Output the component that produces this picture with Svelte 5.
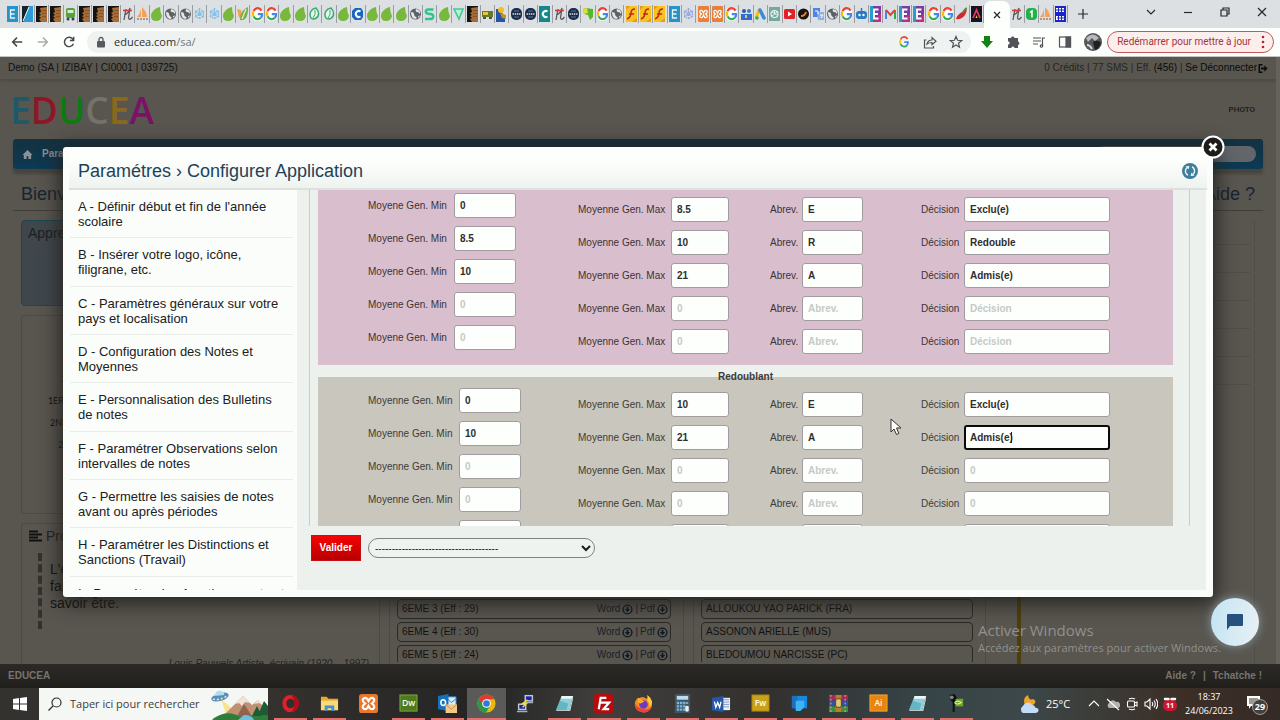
<script>
  const tabs = ('efile slant face face bus face face face script sail leaf globe globe snow snow leaf multi g g leaf leaf ring ring leaf cblue leaf leaf leaf globe sgreen leaf tri face truck worker badge badge cteal script badge map g globe fy ' +
    'fy fy efile spiral xampp xampp g people ads openai youtube planet translate globe g robot epurple gmail epurple epurple g g pepper adark').split(' ');
  const tabsAfter = ['script', 'one', 'sail', 'code'];

  const menu = [
    "A - Définir début et fin de l'année scolaire",
    'B - Insérer votre logo, icône, filigrane, etc.',
    'C - Paramètres généraux sur votre pays et localisation',
    'D - Configuration des Notes et Moyennes',
    'E - Personnalisation des Bulletins de notes',
    'F - Paramétrer Observations selon intervalles de notes',
    'G - Permettre les saisies de notes avant ou après périodes',
    'H - Paramétrer les Distinctions et Sanctions (Travail)',
    'I - Paramétrer les Avertissements et Blâmes'
  ];

  const groups = [
    {
      id: 'nouveau', legend: '', tone: 'pink',
      columns: [
        { id: 'min', label: 'Moyene Gen. Min', hint: '0', values: ['0', '8.5', '10', '', ''] },
        { id: 'max', label: 'Moyenne Gen. Max', hint: '0', values: ['8.5', '10', '21', '', ''] },
        { id: 'abr', label: 'Abrev.', hint: 'Abrev.', values: ['E', 'R', 'A', '', ''] },
        { id: 'dec', label: 'Décision', hint: 'Décision', values: ['Exclu(e)', 'Redouble', 'Admis(e)', '', ''] }
      ]
    },
    {
      id: 'redoublant', legend: 'Redoublant', tone: 'stone',
      columns: [
        { id: 'min', label: 'Moyenne Gen. Min', hint: '0', values: ['0', '10', '', '', ''] },
        { id: 'max', label: 'Moyenne Gen. Max', hint: '0', values: ['10', '21', '', '', ''] },
        { id: 'abr', label: 'Abrev.', hint: 'Abrev.', values: ['E', 'A', '', '', ''] },
        { id: 'dec', label: 'Décision', hint: '0', values: ['Exclu(e)', 'Admis(e)', '', '', ''], active: 1 }
      ]
    }
  ];

  const classes = ['6EME 3 (Eff : 29)', '6EME 4 (Eff : 30)', '6EME 5 (Eff : 24)'];
  const teachers = ['ALLOUKOU YAO PARICK (FRA)', 'ASSONON ARIELLE (MUS)', 'BLEDOUMOU NARCISSE (PC)'];
  const levels = ['1ERE (38)', '1ERE A1 (38)', '2NDE C (38)', '2NDE (38)'];
  const brand = [['E', '#1c5a6b'], ['D', '#8e1626'], ['U', '#0e7a12'], ['C', '#74726b'], ['E', '#8a6a1a'], ['A', '#7a1268']];

  const apps = [
    ['opera', 1], ['folder', 1], ['xampp', 0], ['dw', 1], ['outlook', 1], ['chrome', 1], ['putty', 0], ['note', 1], ['fz', 1],
    ['firefox', 1], ['calc', 1], ['word', 1], ['fw', 1], ['blue', 1], ['rar', 1], ['ai', 1], ['note', 1], ['cam', 1]
  ];
</script>

{#snippet googleG()}
  <path d="M9.6 4.6A4.6 5.4 0 0 0 1.6 5.2" stroke="#e94335" />
  <path d="M1.6 5.2a5 5.6 0 0 0 0 5.2" stroke="#fbbc05" />
  <path d="M1.6 10.4a4.6 5.4 0 0 0 7.2 1.4" stroke="#34a853" />
  <path d="M8.8 11.8a5 5 0 0 0 1.3-3.6H5.8" stroke="#4285f4" />
{/snippet}

{#snippet fav(kind)}
  <svg class="fav" viewBox="0 0 11 16" aria-hidden="true">
    {#if kind === 'efile'}
      <rect width="11" height="16" fill="#2793c6" /><path d="M8 4H3.5v8H8M3.5 8h4" stroke="#e8f6fc" stroke-width="1.3" fill="none" />
    {:else if kind === 'slant'}
      <rect width="11" height="16" fill="#2a9bd6" /><path d="M0 0h7L1 16H0z" fill="#14242c" /><path d="M7 1 1 15" stroke="#fff" stroke-width="1" />
    {:else if kind === 'face'}
      <rect width="11" height="16" fill="#15120f" /><path d="M4 2l7-1v15H5l-2-3 2-1-2-2 2-1-2-2 2-1z" fill="#a36c38" /><path d="M6 4.500h5M6 7.500h4M6 10.500h4" stroke="#7d4f27" stroke-width=".8" />
    {:else if kind === 'bus'}
      <rect x="1" y="2" width="9" height="10" rx="2" fill="#57a13c" /><rect x="2.500" y="4" width="6" height="3" fill="#d6ecd0" /><circle cx="3" cy="13" r="1.500" fill="#345" /><circle cx="8" cy="13" r="1.500" fill="#345" />
    {:else if kind === 'script'}
      <path d="M4 3 2 14M2 9c4 0 4-3 6-7L6.500 12q1 3 4-1" stroke="#5a5a5e" stroke-width="1.300" fill="none" /><path d="M1 4.500h9" stroke="#d43b3b" stroke-width="1.600" />
    {:else if kind === 'sail'}
      <path d="M0 11Q3 8 4 3v8zM5 11V1q5 5 5 10z" fill="#f2a25c" /><path d="M0 13h11" stroke="#a49a94" stroke-width="2" stroke-dasharray="2 1" />
    {:else if kind === 'leaf'}
      <path d="M9 1C4 2 0 6 0 10q0 5 5 5 5 0 6-5-2-4-2-9z" fill="#78b83c" />
    {:else if kind === 'globe'}
      <circle cx="5.500" cy="8" r="5.500" fill="#5c6165" /><path d="M1 6q3 0 3 2t2 3-1 2Q1 12 1 6M6 3q-1 3 1 3t3 2q1-4-4-5M8 10l2-.5-1.500 2.500z" fill="#e2e6e9" />
    {:else if kind === 'snow' || kind === 'spiral'}
      <g stroke={kind === 'snow' ? '#7fbde6' : '#97a4dc'} stroke-width="1.400" fill="none"><path d="M5.500 2v12M1 5l9 6M10 5l-9 6" stroke-dasharray="2 1" /><circle cx="5.500" cy="8" r="4" stroke-dasharray="1.500 1" /></g>
    {:else if kind === 'multi'}
      <path d="M0 3l4 1 1 6-3 2z" fill="#f4a052" /><path d="M11 1C5 4 3 8 3 14c6 1 8-4 8-12" fill="#6fae59" /><path d="M9 3 5 13" stroke="#f0e3a0" stroke-width="1.500" />
    {:else if kind === 'g'}
      <rect y="1" width="11" height="14" rx="5" fill="#fff" /><g fill="none" stroke-width="2.200">{@render googleG()}</g>
    {:else if kind === 'ring'}
      <path d="M7 2C2 3 0 7 1.500 11q1 3 5 1.500C11 10 10 5 7 2z" fill="#e8f6ee" stroke="#3ea873" stroke-width="1.500" /><path d="M6 4Q7 9 4 12" stroke="#3ea873" fill="none" />
    {:else if kind === 'cblue' || kind === 'cteal'}
      {#if kind === 'cblue'}
        <path d="M3 2h6l2 3v6l-2 3H3l-3-3V5z" fill="#1567c2" />
      {:else}
        <rect width="11" height="16" fill="#14878a" />
      {/if}
      <path d="M8.500 5.500A3 3 0 1 0 8.500 10.500" fill="none" stroke="#fff" stroke-width="2" />
    {:else if kind === 'sgreen'}
      <path d="M9.500 3.500H4Q1 4 2 6.500q1 1.500 5 1.500 3 1 2 3.500Q8.500 13 6 13H1" stroke="#31c48f" stroke-width="2.500" fill="none" />
    {:else if kind === 'tri'}
      <path d="M1 3h9L6 13z" fill="#b9efd6" stroke="#3ccb93" stroke-width="1.600" />
    {:else if kind === 'truck'}
      <rect y="5" width="11" height="6" fill="#667a2a" /><rect x="1" y="6" width="5" height="3" fill="#e6c53b" /><path d="M1 12h3m3 0h3" stroke="#222" stroke-width="1.500" />
    {:else if kind === 'worker'}
      <path d="M0 3h4l5 9v4H0z" fill="#2456a8" /><circle cx="5" cy="4" r="3" fill="#f4bd1b" /><path d="M4 7l6 2v4l-4-1z" fill="#c98c27" />
    {:else if kind === 'badge'}
      <rect y="2" width="11" height="12" rx="5" fill="#1b2c49" /><path d="M1.500 8h8" stroke="#d8dee6" stroke-width="1.400" stroke-dasharray="1.500 .7" /><path d="M3 5h5M3 11h5" stroke="#5c7193" />
    {:else if kind === 'map'}
      <path d="M1 3 4 2l7 1v8l-3 3-2-5-4-1z" fill="#55b82b" /><path d="M1 3l4-1 1 5-4 1z" fill="#e6d93a" />
    {:else if kind === 'fy'}
      <rect width="11" height="16" fill="#f6c21c" /><path d="M9 3Q5 3 5 7T1 13M3 8h5" stroke="#c8231c" stroke-width="1.500" fill="none" /><path d="M0 0h4L0 4zM11 16H6l5-4z" fill="#e8991a" />
    {:else if kind === 'xampp'}
      <rect width="11" height="16" rx="1" fill="#e8803a" /><path d="M2 5q1-1.500 2.500 0L5.500 7l1-2q1.500-1.500 2.500 0t-1.500 3q2.500 1.500 1.500 3t-2.500 0l-1-2-1 2q-1.500 1.500-2.500 0t1.500-3Q1 6.500 2 5z" stroke="#fff" stroke-width="1.200" fill="none" />
    {:else if kind === 'people'}
      <rect y="8" width="11" height="6" fill="#2c6fd0" /><circle cx="3" cy="5" r="2" fill="#2a5ca8" /><circle cx="8" cy="5" r="2" fill="#3a78d8" /><path d="M5 9v3" stroke="#f1c93a" stroke-width="2" />
    {:else if kind === 'ads'}
      <path d="M4 4 1.500 11" stroke="#fbbc04" stroke-width="3" stroke-linecap="round" /><path d="m5 4 4 8" stroke="#3c8bd9" stroke-width="3.500" stroke-linecap="round" /><circle cx="2" cy="12" r="1.800" fill="#34a853" />
    {:else if kind === 'openai'}
      <rect y="1" width="11" height="14" fill="#74aa9c" /><circle cx="5.500" cy="8" r="3.500" fill="none" stroke="#e6f3ef" stroke-width="1.200" /><path d="M3 6l5 3M8 6l-5 4M5.500 4v3" stroke="#e6f3ef" />
    {:else if kind === 'youtube'}
      <rect y="3" width="11" height="10" rx="1.500" fill="#e41f26" /><path d="m4 5.500 4 2.500-4 2.500z" fill="#fff" />
    {:else if kind === 'planet'}
      <circle cx="5.500" cy="8" r="5.500" fill="#171310" /><path d="M3 10q4 0 5-4" stroke="#ef7c2a" stroke-width="2" fill="none" />
    {:else if kind === 'translate'}
      <rect y="2" width="7" height="9" fill="#4a86e8" /><path d="M4 6h7v8H5z" fill="#8fb0e0" /><path d="M2 5h3v3M7 9h3l-2 3" stroke="#fff" fill="none" />
    {:else if kind === 'robot'}
      <rect x="0" y="5" width="11" height="8" rx="3" fill="#2b7bc4" /><path d="M5.500 2v3" stroke="#2b7bc4" stroke-width="1.500" /><circle cx="3.500" cy="9" r="1.200" fill="#fff" /><circle cx="7.500" cy="9" r="1.200" fill="#fff" />
    {:else if kind === 'epurple'}
      <rect width="11" height="16" fill="#2a9cc6" /><path d="M3 0h8v9L3 16z" fill="#7a3aa0" /><path d="M3 16 11 7v9z" fill="#c22f7e" /><path d="M8.500 3.500H4v9h4.500M4 8h4" stroke="#fff" stroke-width="1.800" fill="none" />
    {:else if kind === 'gmail'}
      <path d="M1 13V4" stroke="#4285f4" stroke-width="2" /><path d="M10 13V4" stroke="#34a853" stroke-width="2" /><path d="m1 4 4.500 5L10 4" stroke="#ea4335" stroke-width="2" fill="none" />
    {:else if kind === 'pepper'}
      <path d="M11 3Q8 4 6 6 1 9 0 13q7 1 10-6z" fill="#d4262e" /><path d="M7 7q1-4 4-5" stroke="#5c8a3a" stroke-width="1.500" fill="none" />
    {:else if kind === 'adark'}
      <rect width="11" height="16" fill="#131420" /><path d="M2 12 5.500 4 9 12" stroke="#e23a5a" stroke-width="1.800" fill="none" /><path d="m4.500 12 1-3 1 3z" fill="#f3c23a" />
    {:else if kind === 'one'}
      <rect y="2" width="11" height="12" rx="4" fill="#25b04b" /><path d="M4 6.500 6 5v6.500" stroke="#fff" stroke-width="1.500" fill="none" />
    {:else if kind === 'code'}
      <rect width="11" height="16" fill="#1c23c8" /><path d="M1 4h9M1 12h9" stroke="#fff" stroke-width="4" stroke-dasharray="2 1" /><path d="M0 4h11M2 12h7" stroke="#1c23c8" />
    {/if}
  </svg>
{/snippet}

{#snippet download()}
  <svg class="dl" viewBox="0 0 12 12" aria-hidden="true"><circle cx="6" cy="6" r="4.800" fill="none" stroke="#0e1b26" stroke-width="1.500" /><path d="M5 3h2v2.500h2L6 9 3 5.500h2z" fill="#0e1b26" /></svg>
{/snippet}

{#snippet appIcon(kind)}
  <svg class="app-icon" viewBox="0 0 20 20" aria-hidden="true">
    {#if kind === 'opera'}
      <ellipse cx="10" cy="10" rx="6.500" ry="7.200" fill="none" stroke="#e0202c" stroke-width="4.200" /><path d="M10 .8q9 1 9 9.200t-9 9.200q4-2 4-9.200T10 .8" fill="#a8101c" />
    {:else if kind === 'folder'}
      <path d="M1 3h6l2 2h10v12H1z" fill="#e9a92b" /><path d="M1 7h18v10H1z" fill="#fbd978" /><path d="M5 18v-6h10v6h-3v-3H8v3z" fill="#3f93d2" />
    {:else if kind === 'xampp'}
      <rect x="0" y="0" width="20" height="20" rx="3" fill="#e9772c" /><path d="M4.500 5q2-2 4 0L10 7.500 11.500 5q2-2 4 0t-2 5q4 3 2 5t-4 0L10 12.500 8.500 15q-2 2-4 0t2-5q-4-3-2-5z" stroke="#fff" stroke-width="2.200" fill="none" />
    {:else if kind === 'dw' || kind === 'fw' || kind === 'ai'}
      <rect x="1" y="1" width="18" height="17" fill={kind === 'dw' ? '#4d7a1c' : kind === 'fw' ? '#c9a21c' : '#e8850f'} stroke={kind === 'dw' ? '#7dad3a' : kind === 'fw' ? '#a8830c' : '#f7a83a'} />
      <text x="10" y="13" text-anchor="middle" font-family="Open Sans" font-size="9" font-weight="600" fill="#fdfbe8">{kind === 'dw' ? 'Dw' : kind === 'fw' ? 'Fw' : 'Ai'}</text>
    {:else if kind === 'outlook'}
      <path d="M9 3h10v12H9z" fill="#d9ecf8" stroke="#2a86cf" /><path d="M10 5l4 4 5-4" stroke="#2a86cf" fill="none" /><path d="M0 2l11-2v18L0 16z" fill="#1670c0" /><ellipse cx="5.500" cy="9" rx="2.500" ry="3" fill="none" stroke="#fff" stroke-width="1.600" /><path d="M8 11h12v9H8z" fill="#f3c98b" /><path d="m8 11 6 5 6-5" stroke="#c98f43" fill="none" />
    {:else if kind === 'chrome'}
      <circle cx="10" cy="10" r="9.500" fill="#e8b90b" /><path d="M10 10 1.800 5.200A9.500 9.500 0 0 0 9.600 19.500L13.900 12z" fill="#259a49" /><path d="M10 5.500h8.300L18.200 5.200A9.500 9.500 0 0 0 1.800 5.200L6 12z" fill="#df3b30" /><circle cx="10" cy="10" r="4.600" fill="#fff" /><circle cx="10" cy="10" r="3.500" fill="#2f77e0" />
    {:else if kind === 'putty'}
      <rect x="9" y="1" width="9" height="7" fill="#c3c7d0" /><rect x="10.500" y="2.500" width="6" height="4" fill="#1723b8" /><rect x="2" y="10" width="9" height="7" fill="#c3c7d0" /><rect x="3.500" y="11.500" width="6" height="4" fill="#1723b8" /><path d="M9 9h9M1 18.500h11" stroke="#aab" stroke-width="1.500" /><path d="m12 6-5 4h4l-4 4" stroke="#f1e222" stroke-width="1.500" fill="none" />
    {:else if kind === 'note'}
      <path d="M7 2h12l-4 15H1z" fill="#8fd0da" /><path d="M7 2h12l-1 3H6z" fill="#eef6f6" /><path d="M1 17 5 7l9 3-2 7z" fill="#4aa4b4" opacity=".6" /><path d="M1 17h14l4-15v3l-3 13H2z" fill="#dfe5e6" />
    {:else if kind === 'fz'}
      <rect width="20" height="20" rx="2" fill="#b60c0c" /><path d="M5 16 7 4h6M6 9h4M10 9h6l-6 7h6" stroke="#fff" stroke-width="2.300" fill="none" />
    {:else if kind === 'firefox'}
      <path d="M4 4q-4 4-3 9 2 6 9 6.500 8-.5 9-8Q19 5 14 1q1 3-1 4-5-4-9 1z" fill="#f98a1e" /><path d="M1 10q0 8 9 9.500Q17 19 19 12q-3 5-9 4Q4 15 1 10" fill="#ee3f3e" /><circle cx="10" cy="11" r="4.500" fill="#6b3bc4" /><path d="M14 1q1 3 0 6 3 3 2 7 3-2 3-6-1-4-5-7" fill="#ffcd3a" /><path d="M4 4q2 0 4 2l3 2-4 2-3-1z" fill="#ffab2b" />
    {:else if kind === 'calc'}
      <path d="M2 0h16v20H2z" fill="#46545e" /><rect x="4" y="2" width="12" height="4" fill="#b9dcef" /><path d="M4 9.500h9M4 13h9M4 16.500h9" stroke="#6fb9e6" stroke-width="2.500" stroke-dasharray="2.500 .8" /><path d="M13.500 9.500h2.500M13.500 13h2.500v5h-2.500z" stroke="#eaf2f6" fill="#eaf2f6" />
    {:else if kind === 'word'}
      <path d="M9 4h10v13H9z" fill="#e8eef6" /><path d="M12 6h6M12 8.500h6M12 11h6M12 13.500h6" stroke="#7f9cc8" /><path d="M0 4l12-2v17L0 17z" fill="#2458a4" /><path d="m2.500 8 1.500 6 2-5 2 5 1.500-6" stroke="#fff" stroke-width="1.400" fill="none" />
    {:else if kind === 'blue'}
      <path d="M2 2h16v13H2z" fill="#1788dd" /><path d="M2 2h6v13H2z" fill="#1f6fc1" /><path d="M6 7h9v7l-4 4H6z" fill="#3cb5f2" />
    {:else if kind === 'rar'}
      <rect y="1" width="20" height="6" fill="#a32a56" /><rect y="7" width="20" height="6" fill="#2f4fa8" /><rect y="13" width="20" height="6" fill="#3f8d3a" /><rect x="7" y="1" width="6" height="18" fill="#b3802f" /><rect x="7" y="5" width="6" height="9" rx="2" fill="#e5c66a" stroke="#5a3b12" /><path d="M2 1v18M17 1v18" stroke="#e7b8a8" stroke-dasharray="2 2" />
    {:else if kind === 'cam'}
      <path d="M3 1l5-1 3 5-3 4v10H6V9L3 5z" fill="#0e0f10" /><circle cx="5" cy="3.500" r="2" fill="#7d8488" /><path d="M9 5h8v8H9z" fill="#6fa51f" /><path d="M8 9q3-3 7 0-4 3-7 0" fill="none" stroke="#dcefb8" stroke-width="1.200" />
    {/if}
  </svg>
{/snippet}

<div class="screen">
  <header class="chrome">
    <div class="tabstrip">
      <div class="tabs">
        {#each tabs as t}<span class="tab">{@render fav(t)}</span>{/each}
      </div>
      <button class="active-tab" aria-label="Fermer l'onglet"><svg viewBox="0 0 10 10"><path d="m2 2 6 6M8 2 2 8" /></svg></button>
      <div class="tabs tabs-after">
        {#each tabsAfter as t}<span class="tab">{@render fav(t)}</span>{/each}
      </div>
      <button class="newtab" aria-label="Nouvel onglet"><svg viewBox="0 0 12 12"><path d="M6 1v10M1 6h10" /></svg></button>
      <div class="winctl">
        <button aria-label="Rechercher dans les onglets"><svg viewBox="0 0 12 12"><path d="m2 4 4 4 4-4" /></svg></button>
        <button aria-label="Réduire"><svg viewBox="0 0 12 12"><path d="M2 6.500h8" /></svg></button>
        <button aria-label="Restaurer"><svg viewBox="0 0 12 12"><path d="M2 4h6v6H2zM4 4V2h6v6H8" /></svg></button>
        <button aria-label="Fermer"><svg viewBox="0 0 12 12"><path d="m2 2 8 8M10 2l-8 8" /></svg></button>
      </div>
    </div>
    <div class="toolbar">
      <div class="navbtns">
        <button aria-label="Retour"><svg viewBox="0 0 16 16"><path d="M14 8H3M8 3 3 8l5 5" /></svg></button>
        <button class="off" aria-label="Avancer"><svg viewBox="0 0 16 16"><path d="M2 8h11M8 3l5 5-5 5" /></svg></button>
        <button aria-label="Actualiser"><svg viewBox="0 0 16 16"><path d="M12.500 5A5.300 5.300 0 1 0 13 10M13.300 2v4.300H9" /></svg></button>
      </div>
      <div class="address">
        <svg class="lock" viewBox="0 0 10 12"><rect x="1" y="5" width="8" height="6.500" rx="1" fill="#565a5e" /><path d="M3 5V3.500a2 2 0 0 1 4 0V5" fill="none" stroke="#565a5e" stroke-width="1.300" /></svg>
        <span class="url">educea.com<i>/sa/</i></span>
        <svg class="tool" viewBox="0 0 11 16"><g fill="none" stroke-width="1.900">{@render googleG()}</g></svg>
        <svg class="tool line" viewBox="0 0 14 14"><path d="M3.500 5H1.500v8h9v-2M4 9q1-4 5-4V2.500l4 3.700-4 3.500V7.500Q6 7.500 4 9z" /></svg>
        <svg class="tool line" viewBox="0 0 14 14"><path d="m7 1.500 1.600 3.800 4 .3-3.100 2.600 1 4L7 10l-3.500 2.200 1-4L1.400 5.600l4-.3z" /></svg>
      </div>
      <div class="extensions">
        <svg viewBox="0 0 14 14"><path d="M4 1h6v5h3l-6 7-6-7h3z" fill="#118311" /></svg>
        <svg viewBox="0 0 14 14"><path d="M5 3a1.800 1.800 0 0 1 3.500 0H12v3.500a1.800 1.800 0 0 1 0 3.500v3H8.500a1.600 1.600 0 0 0-3.200 0H2V9.500a1.600 1.600 0 0 0 0-3.200V3z" fill="#505458" /></svg>
        <svg class="line" viewBox="0 0 14 14"><path d="M1 3h8M1 6h8M1 9h5M10.500 11V3H13" /><circle cx="9.500" cy="11" r="1.200" /></svg>
        <svg class="line" viewBox="0 0 14 14"><rect x="1.500" y="2" width="11" height="10" /><path d="M8 2h4.500v10H8z" fill="#505458" /></svg>
        <svg class="avatar" viewBox="0 0 18 18"><circle cx="9" cy="9" r="9" fill="#55575a" /><path d="M2 5Q9-2 15 5L11 8 8 5 4 9z" fill="#b9bcbf" /><path d="M9 9q5-3 8 1-2 6-6 7z" fill="#1e1f21" /><path d="M3 12q3 0 5 4" stroke="#d6d8da" stroke-width="2" fill="none" /></svg>
      </div>
      <button class="update">Redémarrer pour mettre à jour<svg viewBox="0 0 4 14"><circle cx="2" cy="2" r="1.300" /><circle cx="2" cy="7" r="1.300" /><circle cx="2" cy="12" r="1.300" /></svg></button>
    </div>
  </header>

  <main class="page">
    <div class="topbar">
      <span>Demo (SA | IZIBAY | CI0001 | 039725)</span>
      <span class="account">0 Crédits | 77 SMS | Eff. <b>(456)</b> | <a href="#sortie">Se Déconnecter</a>
        <svg viewBox="0 0 12 12"><path d="M6 2H2.500v8H6" fill="none" stroke="#0c0c0b" stroke-width="1.600" /><path d="M4.500 5H8V2.500L11.500 6 8 9.500V7H4.500z" fill="#0c0c0b" /></svg>
      </span>
    </div>
    <div class="wrap">
      <div class="brandrow">
        <h1>{#each brand as [c, color]}<span style="color:{color}">{c}</span>{/each}</h1>
        <span class="photo">PHOTO</span>
      </div>
      <nav class="mainnav">
        <svg viewBox="0 0 12 12"><path d="M6 1 .5 6.500H2V11h3V8h2v3h3V6.500h1.500z" fill="#8b9295" /></svg>
        <a href="#parametres">Paramètres</a>
        <input type="search" aria-label="Rechercher" />
      </nav>
      <div class="titles"><h2>Bienvenue</h2><h2>Aide ?</h2></div>
      <div class="columns">
        <div class="col left">
          <section class="notice">Apprendre</section>
          <section class="panel levels">{#each levels as l}<p>{l}</p>{/each}</section>
          <section class="panel quote">
            <h3><svg viewBox="0 0 13 12"><path d="M0 1.500h9M0 4.500h13M0 7.500h9M0 10.500h13" stroke="#11110f" stroke-width="2" /></svg>Proverbe</h3>
            <blockquote>L'école<br />fait<br />savoir être.</blockquote>
            <cite>Louis Pauwels Artiste, écrivain (1920 – 1997)</cite>
          </section>
        </div>
        <section class="panel listing">
          <ul>
            {#each classes as c}
              <li><span>{c}</span><span class="files"><a href="#word">Word {@render download()}</a> | <a href="#pdf">Pdf {@render download()}</a></span></li>
            {/each}
          </ul>
        </section>
        <section class="panel listing">
          <ul>{#each teachers as t}<li><span>{t}</span></li>{/each}</ul>
        </section>
        <aside class="help">{#each Array(6) as _}<hr />{/each}</aside>
      </div>
    </div>
    <div class="rail"></div>

    <div class="dialog" role="dialog" aria-label="Configurer Application">
      <div class="dialog-head">
        <h2>Paramétres › Configurer Application</h2>
        <button class="refresh" aria-label="Actualiser la fenêtre"><svg viewBox="0 0 16 16"><circle cx="8" cy="8" r="8" fill="#3f7d9c" /><path d="M6 12.300A4.600 4.600 0 0 1 5.200 4.500M10 3.700a4.600 4.600 0 0 1 .8 7.800" fill="none" stroke="#e4f2f8" stroke-width="1.500" /><path d="M3.500 3.300 7.500 3 6.500 6.600zM12.500 12.700 8.500 13l1-3.600z" fill="#e4f2f8" /></svg></button>
      </div>
      <div class="dialog-body">
        <ul class="menu">{#each menu as m}<li><a href="#menu">{m}</a></li>{/each}</ul>
        <form class="config">
          <div class="scroller">
            {#each groups as g}
              <fieldset class={g.tone} aria-label={g.legend || 'Non redoublant'}>
                {#if g.legend}<legend>{g.legend}</legend>{/if}
                <div class="fields">
                  {#each g.columns as c}
                    <div class="field-col {c.id}">
                      {#each c.values as v, i}
                        <label class:active={c.active === i}>
                          <span>{c.label}</span>
                          <input type="text" name="{g.id}-{c.id}-{i}" value={v} placeholder={c.hint} />
                          {#if c.active === i}<i class="caret"></i>{/if}
                        </label>
                      {/each}
                    </div>
                  {/each}
                </div>
              </fieldset>
            {/each}
          </div>
          <div class="actions">
            <button type="button" class="submit">Valider</button>
            <select aria-label="Action"><option>-------------------------------------</option></select>
          </div>
        </form>
      </div>
      <button class="close" aria-label="Fermer la fenêtre"><svg viewBox="0 0 24 24"><circle cx="12" cy="12" r="10.500" fill="#1d1c1b" stroke="#fff" stroke-width="2" /><path d="m8.500 8.500 7 7M15.500 8.500l-7 7" stroke="#fff" stroke-width="2.800" /></svg></button>
    </div>

    <div class="watermark"><p>Activer Windows</p><small>Accédez aux paramètres pour activer Windows.</small></div>
    <button class="chat" aria-label="Discussion"><svg viewBox="0 0 18 18"><path d="M2 1h14q1 0 1 1v10q0 1-1 1H4l-3 4V2q0-1 1-1z" fill="#26517e" /></svg></button>
    <svg class="pointer" viewBox="0 0 12 18"><path d="M1 1v13l3-3 2.500 5.500 2.300-1L6.500 10H11z" fill="#fff" stroke="#33332f" /></svg>
  </main>

  <footer class="sitefoot"><b>EDUCEA</b><span><a href="#aide">Aide ?</a><i>|</i><a href="#tchatche">Tchatche !</a></span></footer>

  <div class="taskbar">
    <button class="start" aria-label="Démarrer"><svg viewBox="0 0 14 14"><path d="M0 2l6-1v5.500H0zM7 .900 14 0v6.500H7zM0 7.500h6V13l-6-1zM7 7.500h7V14l-7-1z" fill="#fff" /></svg></button>
    <label class="search">
      <svg class="lens" viewBox="0 0 14 14"><circle cx="8.500" cy="5.500" r="4.500" /><path d="m5 9-4.500 4.500" /></svg>
      <input type="text" placeholder="Taper ici pour rechercher" aria-label="Taper ici pour rechercher" />
      <svg class="scene" viewBox="0 0 58 32" preserveAspectRatio="xMaxYMid slice"><path d="M11 11l15 13-8 8z" fill="#f9e48c" /><path d="M12 29 33 8l9 9 6-5 10 12v8H12z" fill="#c09072" /><path d="m33 8-8 8 4-1 3 3 3-4 5 1zM48 12l-4 4 5-1 3 2z" fill="#f1e3d6" /><path d="M34 16l9 14H26z" fill="#8f6550" /><path d="M4 30q14-9 26-1l28-3v6H2z" fill="#2e7d3a" /><path d="M47 18l-5 10h10zM54 13l-6 14h10V18z" fill="#1c5b33" /><path d="M34 27q8 0 10 5H28z" fill="#6fc0dc" /><ellipse cx="10" cy="9" rx="9" ry="4" transform="rotate(-16 10 9)" fill="#5c8fb4" /><path d="M4 8q2-6 7-5 4 1 3 4z" fill="#aee0f3" /><path d="M3 11q6 2 14-3" stroke="#dce9f1" stroke-width="1.500" stroke-dasharray="2 2" fill="none" /></svg>
    </label>
    <div class="apps">
      {#each apps as [name, running]}
        <button class:running={running === 1} class:current={name === 'chrome'} aria-label={name}>{@render appIcon(name)}</button>
      {/each}
    </div>
    <div class="tray">
      <svg class="weather" viewBox="0 0 20 20"><path d="M9 1Q3 4 6 11h8q5-4 0-6-4 2-5-4z" fill="#eda62b" /><path d="M4 19a4 4 0 0 1 0-7 5 5 0 0 1 9-1q3 0 3 2.500 4 .5 3.500 3Q19 19 16 19z" fill="#c5dcf8" /></svg>
      <span class="temp">25°C</span>
      <div class="status">
        <svg viewBox="0 0 14 14"><path d="m2 9 5-5 5 5" /></svg>
        <svg viewBox="0 0 14 14"><path d="M3 11a3 3 0 0 1 0-5 4 4 0 0 1 7-1 3 3 0 0 1 2 6z" fill="#b4b2ae" stroke="none" /><path d="m1 2 12 11" /></svg>
        <svg viewBox="0 0 14 14"><rect x="2.500" y="4" width="7" height="6" rx="1" /><path d="m9.500 6 2.500-1v4l-2.500-1M4 2q3-1.500 6 0M4 12q3 1.500 6 0" /></svg>
        <svg viewBox="0 0 14 14"><path d="M1 5h2l3-3v10L3 9H1zM8 5q1.500 2 0 4M10 3.500q2.500 3.500 0 7M12 2q3.500 5 0 10" /></svg>
        <svg viewBox="0 0 14 14"><rect x="0" y="3" width="14" height="11" rx="5" fill="#cf1430" stroke="none" /><path d="M2 2h3.500M8.500 2h3.500" stroke-width="2.500" stroke-linecap="round" /><text x="7" y="11" text-anchor="middle" font-size="7" font-weight="700" font-family="Open Sans" fill="#fff" stroke="none">11</text></svg>
      </div>
      <time><span>18:37</span><span>24/06/2023</span></time>
      <svg class="notif" viewBox="0 0 22 22"><path d="M1 3h13v10H5l-2 3v-3H1z" fill="#fff" /><path d="M3 6h9M3 8h9M3 10h6" stroke="#3b332c" /><circle cx="14" cy="14" r="7.500" fill="#44403b" stroke="#a19d98" /><text x="14" y="17" text-anchor="middle" font-size="9" font-weight="700" font-family="Open Sans" fill="#fff">29</text></svg>
    </div>
  </div>
</div>

<style>
  :global(body) { background: #595650; }
  * { box-sizing: border-box; }
  h1, h2, h3, p, ul, blockquote { margin: 0; padding: 0; font-weight: 400; }
  ul { list-style: none; }
  a { color: inherit; text-decoration: none; }
  button { padding: 0; border: 0; background: none; color: inherit; font: inherit; }
  svg { display: block; flex: none; }
  .screen { height: 100vh; display: flex; flex-direction: column; overflow: hidden; font: 10px/12px "Liberation Sans", Arial, sans-serif; color: #11110f; }

  .chrome { flex: none; font-family: "Open Sans", sans-serif; }
  .tabstrip { height: 28px; display: flex; background: #dce0e3; padding-left: 6px; }
  .tabs { flex: 1; display: grid; grid-auto-flow: column; grid-auto-columns: 1fr; align-items: center; }
  .tabs-after { flex: none; width: 58px; }
  .tab { display: flex; justify-content: center; border-right: 1px solid #9a9ea2; height: 18px; align-items: center; }
  .fav { width: 11px; height: 16px; }
  .active-tab { width: 26px; margin-top: 1px; border-radius: 7px 7px 0 0; background: #fdfffd; display: grid; place-items: center; }
  .active-tab svg { width: 10px; height: 10px; }
  .newtab { width: 30px; display: grid; place-items: center; }
  .newtab svg, .winctl svg { width: 12px; height: 12px; }
  .active-tab svg, .newtab svg, .winctl svg { fill: none; stroke: #26282a; stroke-width: 1.2; }
  .winctl { display: grid; grid-template-columns: repeat(4, 37px); margin-left: 34px; }
  .winctl button { display: grid; place-items: center; padding-bottom: 4px; }
  .toolbar { height: 29px; display: flex; align-items: center; background: #fdfffd; border-bottom: 1px solid #c2c5c2; }
  .navbtns { display: flex; gap: 12px; padding: 0 11px 0 10px; }
  .navbtns svg { width: 14px; height: 14px; fill: none; stroke: #45494c; stroke-width: 1.7; }
  .navbtns .off svg { stroke: #a9acae; }
  .address { flex: 1; height: 22px; border-radius: 11px; background: #eef2f1; display: flex; align-items: center; gap: 12px; padding: 0 8px 0 9px; }
  .lock { width: 10px; height: 12px; }
  .url { flex: 1; margin-left: -4px; font-size: 11px; line-height: 16px; color: #2c2f31; }
  .url i { font-style: normal; color: #72767a; }
  .tool { width: 14px; height: 14px; }
  .line { fill: none; stroke: #505458; stroke-width: 1.2; }
  .extensions { display: flex; align-items: center; gap: 12px; padding: 0 5px 0 9px; }
  .extensions svg { width: 14px; height: 14px; }
  .extensions .avatar { width: 18px; height: 18px; }
  .update { height: 22px; margin-right: 6px; padding: 0 8px 0 9px; border: 1px solid #c05a5a; border-radius: 11px; background: #fbeeec; color: #a8343a; font: 10px/12px Roboto, sans-serif; display: flex; align-items: center; gap: 10px; white-space: nowrap; }
  .update svg { width: 4px; height: 14px; fill: #b3262d; }

  .page { flex: 1; min-height: 0; position: relative; overflow: hidden; background: #595650; }
  .topbar { height: 23px; display: flex; justify-content: space-between; align-items: center; padding: 0 12px 0 8px; border-bottom: 1px solid #4f4c47; box-shadow: 0 1px 3px #4b4944; }
  .account { display: flex; align-items: center; white-space: pre; color: #262522; }
  .account a, .account b { color: #0a0a09; font-weight: 400; }
  .account svg { width: 11px; height: 11px; }
  .wrap { padding: 0 17px 0 13px; height: 585px; display: flex; flex-direction: column; }
  .brandrow { height: 59px; display: flex; justify-content: space-between; align-items: center; padding-right: 8px; }
  h1 { font: 600 37px/40px "Open Sans", sans-serif; margin-left: -3px; }
  .photo { font: 500 8px/10px Roboto, sans-serif; color: #1a1917; }
  .mainnav { height: 30px; flex: none; border-radius: 3px; background: linear-gradient(#14313f, #0c3a54); display: flex; align-items: center; gap: 9px; padding: 0 7px 0 9px; font-weight: 700; color: #8b9295; box-shadow: 0 5px 3px #48453f; }
  .mainnav svg { width: 11px; height: 11px; }
  .mainnav input { margin-left: auto; width: 160px; height: 16px; border: 0; border-radius: 8px; background: #62666a; }
  .titles { height: 42px; flex: none; display: flex; justify-content: space-between; align-items: center; padding: 8px 8px 0; border-bottom: 1px solid #403e3a; }
  .titles h2 { font-size: 18px; line-height: 22px; color: #172431; }
  .columns { flex: 1; min-height: 0; display: grid; grid-template-columns: 359fr 295fr 293fr 260fr; gap: 9px; padding: 9px 8px 0; }
  .panel { border: 1px solid #4c4a45; border-radius: 3px; }
  .col { display: flex; flex-direction: column; gap: 9px; min-height: 0; }
  .notice { height: 86px; flex: none; border: 1px solid #1d4650; border-radius: 4px; background: #40474c; padding: 4px 6px; font-size: 14px; line-height: 16px; color: #1c1e1f; }
  .levels { height: 199px; flex: none; display: flex; flex-direction: column; gap: 10px; padding-top: 57px; font: 700 9px/12px Lato, sans-serif; }
  .levels p { width: 78px; text-align: right; }
  .quote { flex: 1; min-height: 0; overflow: hidden; border-bottom: 0; padding: 4px 10px 0 7px; display: flex; flex-direction: column; }
  .quote h3 { display: flex; gap: 4px; align-items: center; font-size: 14px; line-height: 16px; color: #24231f; }
  .quote svg { width: 13px; height: 12px; }
  blockquote { flex: none; margin: 9px 0 0 9px; padding: 8px; border-left: 4px dashed #33312e; font-size: 14px; line-height: 17px; height: 76px; }
  cite { flex: none; margin-top: 29px; text-align: right; font-size: 10px; line-height: 12px; color: #24221f; white-space: nowrap; }
  .listing { border-bottom: 0; display: flex; flex-direction: column; padding: 0 12px 3px 7px; min-height: 0; }
  .listing ul { margin-top: auto; height: 63px; overflow: hidden; }
  .listing li { height: 20px; margin-bottom: 3px; border: 1px solid #2b2a27; border-radius: 4px; display: flex; justify-content: space-between; align-items: center; padding: 0 2px 0 4px; white-space: nowrap; }
  .files, .files a { display: flex; align-items: center; gap: 2px; color: #182028; }
  .dl { width: 11px; height: 11px; }
  .help { border-right: 1px solid #504e49; padding: 24px 4px 0 0; border-left: 4px solid #4d3f0c; margin: 0 0 0 22px; }
  .help hr { height: 1px; margin: 0 0 27px; border: 0; background: #504e49; }
  .rail { position: absolute; inset: 0 0 0 auto; width: 4px; background: #65625d; }

  .dialog { position: absolute; inset: 90px 67px 67px 63px; display: flex; flex-direction: column; padding: 0 7px 7px; border-radius: 3px; background: #fafdf9; box-shadow: 0 3px 20px 3px #23221f; }
  .dialog-head { height: 43px; flex: none; margin: 0 -1px; display: flex; align-items: center; justify-content: space-between; padding: 7px 9px 0 9px; background: linear-gradient(#fdfffd 30%, #eff3f0); border-bottom: 2px solid #dde0dd; }
  .dialog-head h2 { font-size: 18px; line-height: 22px; color: #1d4258; }
  .refresh svg { width: 16px; height: 16px; }
  .dialog-body { flex: 1; min-height: 0; display: flex; }
  .menu { width: 227px; flex: none; overflow: hidden; display: grid; grid-auto-rows: 48px 49px 48px; padding-right: 4px; }
  .menu li { border-bottom: 1px solid #e9ece9; padding: 9px 6px 0 8px; font-size: 13px; line-height: 15px; color: #20201e; }
  .config { flex: 1; min-width: 0; display: flex; flex-direction: column; background: #edf1ee; padding: 0 16px 0 12px; }
  .scroller { flex: 1; min-height: 0; overflow: hidden; border: solid #c9ccca; border-width: 0 1px; padding: 0 16px 0 8px; }
  fieldset { margin: 0; min-width: 0; border: 0; padding: 0 0 11px 50px; color: #3b3236; }
  .pink { background: #d9bfcd; padding-top: 3px; }
  .stone { background: #c8c6bd; margin-top: 6px; padding-top: 5px; color: #3d3c38; }
  legend { margin: 0 auto; padding: 0 50px 0 0; font-weight: 700; line-height: 12px; }
  .fields { display: grid; grid-template-columns: 210fr 192fr 151fr 252fr; }
  .field-col { display: flex; flex-direction: column; gap: 8px; padding-top: 4px; }
  .field-col.min { padding-top: 0; }
  .field-col label { position: relative; display: flex; align-items: center; height: 25px; }
  .field-col label span { width: 93px; white-space: nowrap; }
  .field-col input { width: 58px; height: 25px; padding: 0 5px; border: 1px solid #a29ca0; border-radius: 3px; background: #fdfffd; color: #2e2e2c; font: 700 10px/12px "Liberation Sans", Arial, sans-serif; }
  .field-col input::placeholder { color: #c6c9c6; }
  .min label span { width: 91px; }
  .pink .min label span { width: 86px; }
  .field-col.min input { width: 62px; }
  .field-col.abr label span { width: 32px; }
  .field-col.abr input { width: 61px; }
  .field-col.dec label span { width: 43px; }
  .field-col.dec input { width: 146px; }
  .field-col .active input { border: 2px solid #0b0b0b; padding: 0 4px; }
  .caret { position: absolute; left: 90px; top: 7px; width: 1px; height: 11px; background: #222; }
  .actions { height: 64px; flex: none; display: flex; align-items: flex-start; gap: 7px; padding: 9px 0 0 2px; }
  .submit { width: 50px; height: 26px; background: linear-gradient(#f40404, #b80000); border: 1px solid #c41212; color: #fff; font-weight: 700; }
  .actions select { width: 227px; height: 20px; margin-top: 3px; padding: 0 2px; border: 1px solid #7f8280; border-radius: 10px; background: #eff3f0; color: #1b1b1a; font: 10px/12px "Liberation Sans", Arial, sans-serif; }
  .close { position: absolute; top: -12px; right: -12px; }
  .close svg { width: 24px; height: 24px; }

  .watermark { position: absolute; right: 52px; bottom: 8px; width: 250px; color: #91908b; font-family: "Open Sans", sans-serif; white-space: nowrap; }
  .watermark p { font-size: 15px; line-height: 20px; }
  .watermark small { display: block; font-size: 11px; line-height: 16px; }
  .chat { position: absolute; right: 21px; bottom: 18px; width: 48px; height: 48px; border-radius: 24px; display: grid; place-items: center; background: linear-gradient(100deg, #c2e3f5, #eaf1f4); box-shadow: 0 0 10px #8b9ba0; }
  .chat svg { width: 18px; height: 18px; }
  .pointer { position: absolute; left: 890px; top: 361px; width: 12px; height: 18px; }

  .sitefoot { height: 24px; flex: none; display: flex; align-items: center; justify-content: space-between; padding: 0 18px 0 8px; background: linear-gradient(#2c2a27, #201f1c); color: #77746f; font-weight: 700; }
  .sitefoot i { font-style: normal; margin: 0 7px; }

  .taskbar { height: 32px; flex: none; display: flex; color: #fff; font-family: "Open Sans", sans-serif; background: linear-gradient(90deg, #33322f, #35322f 20%, #242424 38%, #403f3d 47%, #33302e 60%, #374447 72%, #3c4849 80%, #3c2f27 92%, #352a25); }
  .start { width: 39px; display: grid; place-items: center; }
  .start svg { width: 14px; height: 14px; }
  .search { position: relative; width: 229px; display: flex; align-items: center; gap: 8px; padding-left: 9px; background: #f4f7f4; color: #333; }
  .lens { width: 14px; height: 14px; fill: none; stroke: #2c2c2c; stroke-width: 1.2; }
  .search input { flex: 1; min-width: 0; border: 0; padding: 0; background: none; font: 11px/16px "Open Sans", sans-serif; }
  .search input::placeholder { color: #3c3d3d; }
  .scene { width: 58px; height: 32px; margin-left: -8px; }
  .apps { flex: 1; display: grid; grid-template-columns: repeat(18, 1fr); padding-left: 3px; }
  .apps button { display: grid; place-items: center; border-bottom: 2px solid transparent; border-radius: 0; background-clip: padding-box; margin: 0 3px; }
  .apps .running { border-bottom-color: #e2706c; }
  .apps .current { background-color: #5a5a59; margin: 0; }
  .app-icon { width: 19px; height: 19px; }
  .tray { width: 304px; display: flex; align-items: center; padding-left: 43px; }
  .weather { width: 20px; height: 20px; }
  .temp { font-size: 11px; line-height: 16px; width: 38px; padding-left: 7px; white-space: nowrap; }
  .status { display: flex; gap: 5px; margin: 0 8px 0 10px; }
  .status svg { width: 14px; height: 14px; fill: none; stroke: #fff; stroke-width: 1.1; }
  time { display: flex; flex-direction: column; align-items: center; font-size: 9px; line-height: 14px; width: 48px; }
  .notif { width: 22px; height: 22px; margin-left: 13px; }
</style>
